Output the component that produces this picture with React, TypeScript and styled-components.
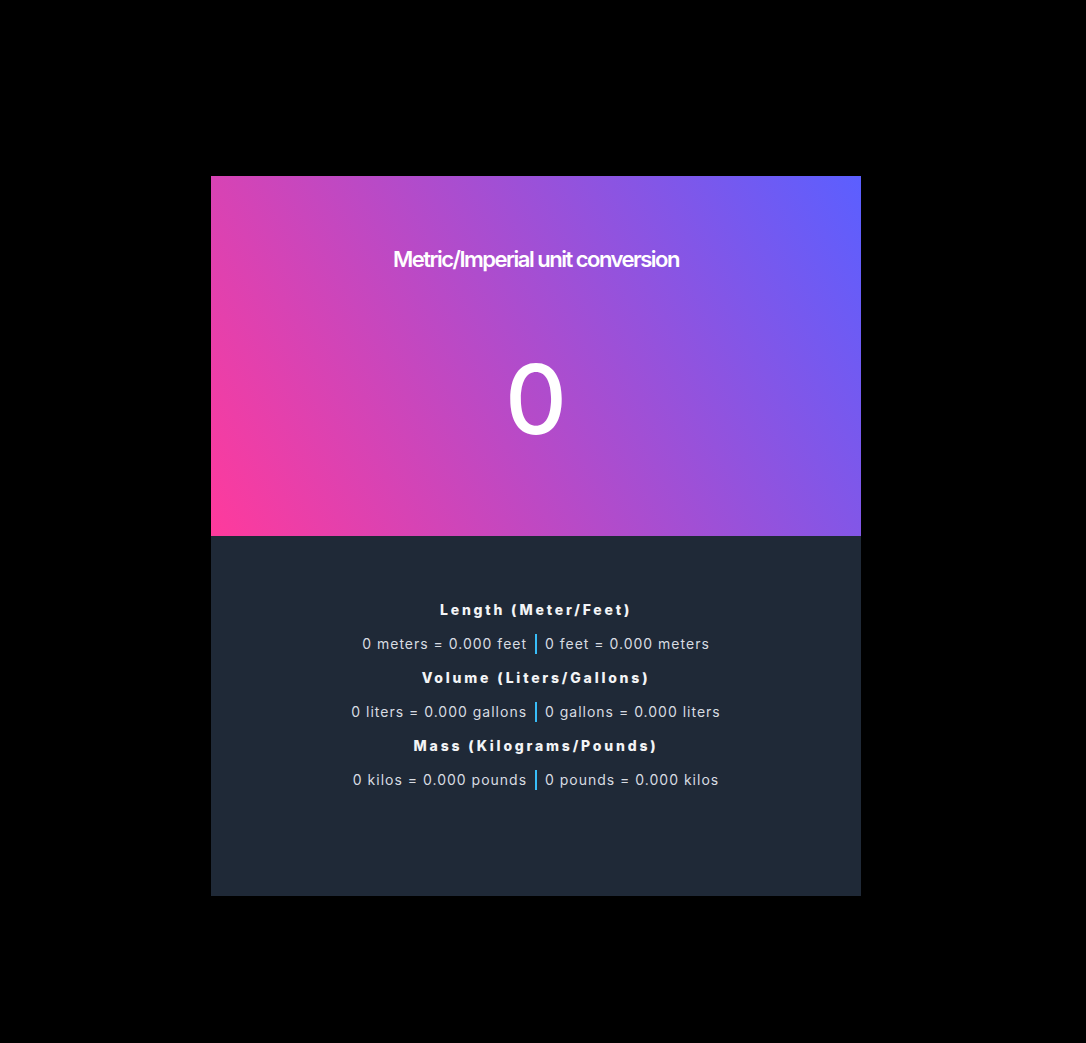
import React from "react";
import styled, { createGlobalStyle } from "styled-components";

const Global = createGlobalStyle`
  html, body { margin: 0; padding: 0; background: #000; }
  body { font-family: Inter, "Noto Sans", sans-serif; }
`;

const Page = styled.div`
  min-height: 1043px;
  padding: 176px 0 0 211px;
  box-sizing: border-box;
`;

const Card = styled.div`
  width: 650px;
  display: flex;
  flex-direction: column;
`;

const Hero = styled.section`
  height: 360px;
  background: linear-gradient(60deg, #ff3a9c, #5b5fff);
  display: flex;
  flex-direction: column;
  align-items: center;
  color: #fff;
`;

const Title = styled.h1`
  margin: 69px 0 0;
  font-size: 22px;
  font-weight: 600;
  letter-spacing: -1.5px;
  line-height: 28px;
`;

const Value = styled.div`
  margin-top: 78px;
  font-size: 96px;
  font-weight: 500;
  line-height: 1;
`;

const Results = styled.section`
  height: 360px;
  background: #1f2937;
  display: flex;
  flex-direction: column;
  align-items: center;
  padding-top: 57px;
  box-sizing: border-box;
`;

const Heading = styled.h2`
  margin: 0;
  font-size: 14px;
  font-weight: 800;
  letter-spacing: 2.8px;
  line-height: 34px;
  color: #f3f4f6;
`;

const Line = styled.p`
  margin: 0;
  font-size: 14px;
  letter-spacing: 1px;
  line-height: 34px;
  color: #d8dce2;
`;

const Sep = styled.span`
  display: inline-block;
  width: 2px;
  height: 20px;
  background: #38bdf8;
  vertical-align: middle;
  margin: -2px 3px 0;
`;

const rows = [
  { h: "Length (Meter/Feet)", a: "0 meters = 0.000 feet", b: "0 feet = 0.000 meters" },
  { h: "Volume (Liters/Gallons)", a: "0 liters = 0.000 gallons", b: "0 gallons = 0.000 liters" },
  { h: "Mass (Kilograms/Pounds)", a: "0 kilos = 0.000 pounds", b: "0 pounds = 0.000 kilos" },
];

export default function App() {
  return (
    <>
      <Global />
      <Page>
        <Card>
          <Hero>
            <Title>Metric/Imperial unit conversion</Title>
            <Value>0</Value>
          </Hero>
          <Results>
            {rows.map((r) => (
              <React.Fragment key={r.h}>
                <Heading>{r.h}</Heading>
                <Line>
                  {r.a} <Sep /> {r.b}
                </Line>
              </React.Fragment>
            ))}
          </Results>
        </Card>
      </Page>
    </>
  );
}
